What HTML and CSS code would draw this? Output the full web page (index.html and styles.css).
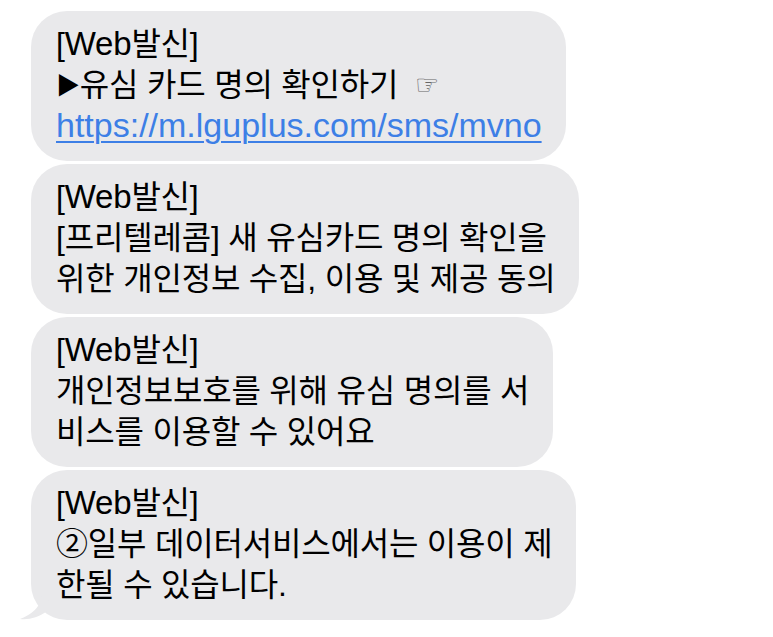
FILE: index.html
```html
<!DOCTYPE html>
<html lang="ko">
<head>
	<meta charset="UTF-8">
	<title>메시지</title>
	<link rel="stylesheet" href="styles.css">
</head>
<body>
	<div class="thread">
		<div class="bubble">
			[<span class="en">Web</span>발신]<br>
			<span class="arrow">▶</span>유심 카드 명의 확인하기 <span class="hand">☞</span><br>
			<a href="#">https://m.lguplus.com/sms/mvno</a>
		</div>
		<div class="bubble">
			[<span class="en">Web</span>발신]<br>
			[프리텔레콤] 새 유심카드 명의 확인을<br>
			위한 개인정보 수집, 이용 및 제공 동의
		</div>
		<div class="bubble">
			[<span class="en">Web</span>발신]<br>
			개인정보보호를 위해 유심 명의를 서<br>
			비스를 이용할 수 있어요
		</div>
		<div class="bubble last">
			[<span class="en">Web</span>발신]<br>
			②일부 데이터서비스에서는 이용이 제<br>
			한될 수 있습니다.
			<svg class="tail" width="30" height="30" viewBox="0 0 30 30">
				<path d="M22 0 C22 12 18 22 0 29 C10 30 18 27 26 22 L30 0 Z" fill="#e9e9eb"/>
			</svg>
		</div>
	</div>
</body>
</html>
```
FILE: styles.css
```css
*{padding: 0;margin: 0;}
body{
	background: #fff;
	font-family: "Liberation Sans", "Noto Sans CJK KR", sans-serif;
	color: #000;
}
.thread{
	display: flex;
	flex-direction: column;
	align-items: flex-start;
	gap: 3px;
	padding: 11px 0 0 31px;
}
.bubble{
	position: relative;
	background-color: #e9e9eb;
	border-radius: 36px;
	padding: 13px 24px 14px 25px;
	font-size: 32px;
	line-height: 41px;
	letter-spacing: -0.2px;
	white-space: nowrap;
}
.bubble span,
.bubble a{
	line-height: 0;
}
.bubble .en{
	font-size: 33px;
}
.bubble .arrow{
	font-size: 24px;
	vertical-align: 2px;
}
.bubble a{
	font-size: 34px;
	letter-spacing: 0;
	color: #3d7fe6;
	text-decoration: underline;
	text-decoration-thickness: 2px;
	text-underline-offset: 4px;
}
.bubble .hand{
	font-family: "DejaVu Sans", sans-serif;
	font-size: 27px;
	color: #666;
	vertical-align: 2px;
	margin-left: 8px;
}
.bubble .tail{
	position: absolute;
	left: -11px;
	bottom: 0;
}
```
